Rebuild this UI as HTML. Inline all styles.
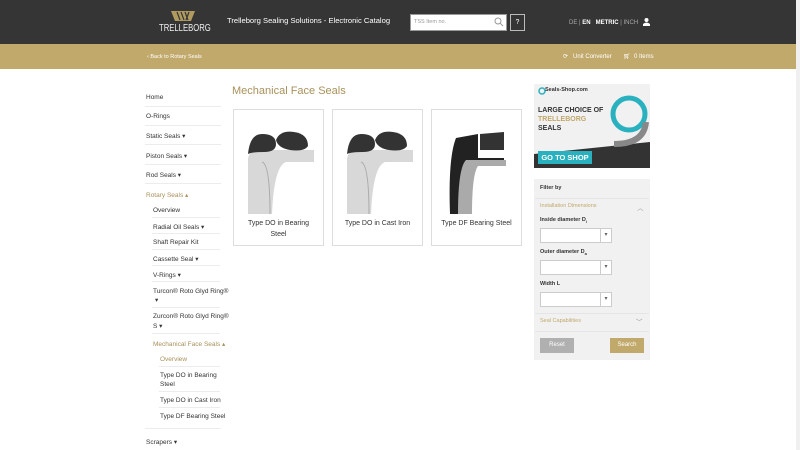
<!DOCTYPE html>
<html><head><meta charset="utf-8"><style>
*{margin:0;padding:0;box-sizing:border-box}
body{width:800px;height:450px;overflow:hidden;background:#fff;font-family:"Liberation Sans",sans-serif;position:relative;color:#333}
.a{position:absolute}
.hdr{left:0;top:0;width:800px;height:44px;background:#353535}
.bar{left:0;top:44px;width:800px;height:25px;background:#c1a96c}
.t{font-size:6.5px;white-space:nowrap}
.nav div{position:absolute;font-size:6.5px;white-space:nowrap;color:#333}
.sep{position:absolute;height:1px;background:#ececec}
.card{border:1px solid #ddd;width:91px;height:137px;top:109px}
.card .cap{position:absolute;left:0;right:0;top:108px;text-align:center;font-size:7px;line-height:11px;color:#333}
.sel{position:absolute;left:540px;width:72px;height:15px;border:1px solid #ccc;background:#fff}
.sel:after{content:"▾";position:absolute;right:0;top:0;width:10px;height:13px;border-left:1px solid #ccc;font-size:6px;text-align:center;line-height:13px;color:#666}
</style></head><body>
<div class="a hdr"></div>
<svg class="a" style="left:171px;top:11px" width="24" height="10" viewBox="0 0 24 10"><path d="M0 0H24L20 10H4Z" fill="#b09a5e"/><path d="M6 1L9 9M10 1L13 9M14 1L17 9M18 1L15 9" stroke="#353535" stroke-width="1.2"/></svg>
<div class="a" style="left:159px;top:23px;font-size:10px;color:#eee;transform:scaleX(0.77);transform-origin:0 0">TRELLEBORG</div>
<div class="a" style="left:227px;top:16px;font-size:7.6px;color:#fff">Trelleborg Sealing Solutions - Electronic Catalog</div>
<div class="a" style="left:410px;top:14px;width:97px;height:17px;background:#fff;border:1px solid #999"></div>
<div class="a t" style="left:414px;top:19px;color:#999;font-size:5.5px">TSS Item no.</div>
<svg class="a" style="left:494px;top:17px" width="10" height="10"><circle cx="4" cy="4" r="3" stroke="#999" fill="none"/><path d="M6 6L9 9" stroke="#999"/></svg>
<div class="a" style="left:510px;top:14px;width:15px;height:17px;border:1px solid #bbb;color:#fff;font-size:7px;text-align:center;line-height:15px">?</div>
<div class="a t" style="left:569px;top:20px;color:#aaa;font-size:6px">DE | <b style="color:#fff">EN</b> &nbsp; <b style="color:#fff">METRIC</b> | INCH</div>
<svg class="a" style="left:643px;top:18px" width="7" height="8"><circle cx="3.5" cy="2" r="2" fill="#fff"/><path d="M0 8V6Q3.5 3 7 6V8Z" fill="#fff"/></svg>
<div class="a bar"></div>
<div class="a t" style="left:147px;top:54px;color:#fff;font-size:5.5px">‹ Back to Rotary Seals</div>
<div class="a t" style="left:563px;top:53px;color:#fff;font-size:6px">⟳ &nbsp; Unit Converter</div>
<div class="a t" style="left:623px;top:53px;color:#fff;font-size:6px">🛒︎ &nbsp;0 Items</div>

<div class="nav">
<div style="left:146px;top:94px">Home</div><span class="sep" style="left:145px;top:106px;width:76px"></span>
<div style="left:146px;top:113px">O-Rings</div><span class="sep" style="left:145px;top:125px;width:76px"></span>
<div style="left:146px;top:132px">Static Seals ▾</div><span class="sep" style="left:145px;top:144px;width:76px"></span>
<div style="left:146px;top:152px">Piston Seals ▾</div><span class="sep" style="left:145px;top:164px;width:76px"></span>
<div style="left:146px;top:171px">Rod Seals ▾</div><span class="sep" style="left:145px;top:183px;width:76px"></span>
<div style="left:146px;top:191px;color:#a8915b">Rotary Seals ▴</div>
<div style="left:153px;top:207px">Overview</div><span class="sep" style="left:152px;top:217px;width:68px"></span>
<div style="left:153px;top:223px">Radial Oil Seals ▾</div><span class="sep" style="left:152px;top:233px;width:68px"></span>
<div style="left:153px;top:239px">Shaft Repair Kit</div><span class="sep" style="left:152px;top:249px;width:68px"></span>
<div style="left:153px;top:255px">Cassette Seal ▾</div><span class="sep" style="left:152px;top:265px;width:68px"></span>
<div style="left:153px;top:271px">V-Rings ▾</div><span class="sep" style="left:152px;top:281px;width:68px"></span>
<div style="left:153px;top:288px">Turcon® Roto Glyd Ring®</div><div style="left:155px;top:296px">▾</div><span class="sep" style="left:152px;top:307px;width:68px"></span>
<div style="left:153px;top:313px">Zurcon® Roto Glyd Ring®</div><div style="left:153px;top:322px">S ▾</div><span class="sep" style="left:152px;top:333px;width:68px"></span>
<div style="left:153px;top:340px;color:#a8915b">Mechanical Face Seals ▴</div>
<div style="left:160px;top:356px;color:#a8915b">Overview</div><span class="sep" style="left:159px;top:366px;width:61px"></span>
<div style="left:160px;top:372px">Type DO in Bearing</div><div style="left:160px;top:381px">Steel</div><span class="sep" style="left:159px;top:391px;width:61px"></span>
<div style="left:160px;top:397px">Type DO in Cast Iron</div><span class="sep" style="left:159px;top:407px;width:61px"></span>
<div style="left:160px;top:413px">Type DF Bearing Steel</div>
<span class="sep" style="left:145px;top:428px;width:76px"></span>
<div style="left:146px;top:438px">Scrapers ▾</div>
</div>

<div class="a" style="left:232px;top:85px;font-size:11px;color:#a8915b">Mechanical Face Seals</div>

<div class="a card" style="left:233px"><svg class="a" style="left:12px;top:18px" width="68" height="86" viewBox="0 0 68 86"><path d="M2 30Q4 22 14 22L68 22V34L40 34Q28 38 26 86H2Z" fill="#d8d8d8"/><path d="M16 34Q24 36 24 86" stroke="#aaa" fill="none"/><path d="M2 26Q4 6 16 6Q30 6 30 16Q30 24 18 24Q6 24 2 26Z" fill="#333"/><path d="M30 12Q34 2 48 4Q62 6 62 18Q58 24 44 22Q32 20 30 12Z" fill="#333"/></svg><div class="cap">Type DO in Bearing<br>Steel</div></div>
<div class="a card" style="left:332px"><svg class="a" style="left:12px;top:18px" width="68" height="86" viewBox="0 0 68 86"><path d="M2 30Q4 22 14 22L68 22V34L40 34Q28 38 26 86H2Z" fill="#d8d8d8"/><path d="M16 34Q24 36 24 86" stroke="#aaa" fill="none"/><path d="M2 26Q4 6 16 6Q30 6 30 16Q30 24 18 24Q6 24 2 26Z" fill="#333"/><path d="M30 12Q34 2 48 4Q62 6 62 18Q58 24 44 22Q32 20 30 12Z" fill="#333"/></svg><div class="cap">Type DO in Cast Iron</div></div>
<div class="a card" style="left:431px"><svg class="a" style="left:12px;top:18px" width="68" height="86" viewBox="0 0 68 86"><path d="M6 86Q4 30 12 10L34 6V22L60 22V32L34 32Q26 40 24 86Z" fill="#222"/><path d="M14 86Q14 40 22 32L62 32V38L34 38Q28 46 28 86Z" fill="#aaa"/><path d="M36 6L60 4V22H36Z" fill="#333"/><path d="M34 22H60V30H34Z" fill="#fff"/></svg><div class="cap">Type DF Bearing Steel</div></div>

<div class="a" style="left:534px;top:84px;width:116px;height:84px;background:#f1f1f1"></div>
<svg class="a" style="left:534px;top:84px" width="116" height="84"><path d="M0 84V70L116 58V84Z" fill="#333"/><circle cx="95" cy="30" r="16" fill="none" stroke="#2ab1c0" stroke-width="5"/><path d="M80 60Q110 60 112 38" stroke="#888" stroke-width="6" fill="none"/><circle cx="8" cy="7" r="3" fill="none" stroke="#2ab1c0" stroke-width="1.5"/></svg>
<div class="a t" style="left:545px;top:87px;font-size:5.5px;font-weight:bold">Seals-Shop.com</div>
<div class="a" style="left:538px;top:106px;font-size:7px;font-weight:bold;line-height:9px;color:#333">LARGE CHOICE OF<br><span style="color:#c1a96c">TRELLEBORG</span><br>SEALS</div>
<div class="a" style="left:538px;top:151px;width:54px;height:13px;background:#2ab1c0;color:#fff;font-size:7.5px;font-weight:bold;text-align:center;line-height:13px">GO TO SHOP</div>

<div class="a" style="left:534px;top:179px;width:116px;height:181px;background:#f1f1f1"></div>
<div class="a t" style="left:540px;top:185px;font-weight:bold;font-size:5.5px">Filter by</div>
<div class="a" style="left:535px;top:198px;width:114px;height:1px;background:#e5e5e5"></div>
<div class="a t" style="left:540px;top:203px;color:#c1a96c;font-size:5.5px">Installation Dimensions</div>
<div class="a t" style="left:637px;top:202px;color:#999">︿</div>
<div class="a t" style="left:540px;top:217px;font-size:5.5px;font-weight:bold">Inside diameter D<sub style="font-size:4px">i</sub></div>
<div class="sel" style="top:228px"></div>
<div class="a t" style="left:540px;top:249px;font-size:5.5px;font-weight:bold">Outer diameter D<sub style="font-size:4px">a</sub></div>
<div class="sel" style="top:260px"></div>
<div class="a t" style="left:540px;top:281px;font-size:5.5px;font-weight:bold">Width L</div>
<div class="sel" style="top:292px"></div>
<div class="a" style="left:535px;top:313px;width:114px;height:1px;background:#e5e5e5"></div>
<div class="a t" style="left:540px;top:318px;color:#c1a96c;font-size:5.5px">Seal Capabilities</div>
<div class="a t" style="left:636px;top:316px;color:#999">﹀</div>
<div class="a" style="left:535px;top:331px;width:114px;height:1px;background:#e5e5e5"></div>
<div class="a" style="left:540px;top:338px;width:34px;height:15px;background:#b0b0b0;color:#fff;font-size:6px;text-align:center;line-height:15px">Reset</div>
<div class="a" style="left:610px;top:338px;width:34px;height:15px;background:#c1a96c;color:#fff;font-size:6px;text-align:center;line-height:15px">Search</div>
<div class="a" style="left:796px;top:0;width:4px;height:450px;background:#f0f0f0"></div>
</body></html>
